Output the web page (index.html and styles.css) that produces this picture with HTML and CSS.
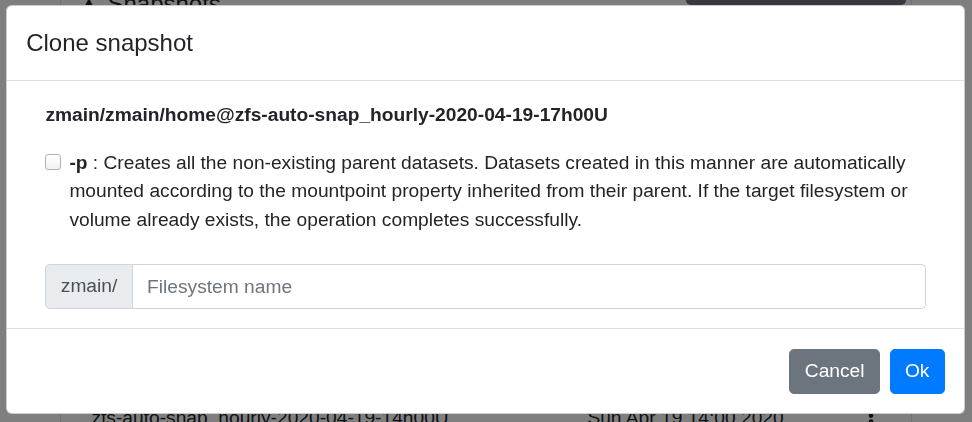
FILE: index.html
```html
<!DOCTYPE html>
<html lang="en">
<head>
<meta charset="utf-8">
<title>Clone snapshot</title>
<link rel="stylesheet" href="styles.css">
</head>
<body>
<div class="page">
  <div class="page-head">
    <h4 class="page-title">▲ Snapshots</h4>
    <div class="head-btn"></div>
  </div>
  <div class="snap-row">
    <div class="cell cell-name">zfs-auto-snap_hourly-2020-04-19-14h00U</div>
    <div class="cell cell-date">Sun Apr 19 14:00 2020</div>
    <div class="cell cell-menu">
      <svg class="kebab" width="6" height="20" viewBox="0 0 6 20"><circle cx="3" cy="2.6" r="2.3" fill="#212529"/><circle cx="3" cy="8.6" r="2.3" fill="#212529"/><circle cx="3" cy="14.6" r="2.3" fill="#212529"/></svg>
    </div>
  </div>
</div>

<div class="backdrop"></div>

<div class="modal">
  <div class="modal-header">
    <h5 class="modal-title">Clone snapshot</h5>
  </div>
  <div class="modal-body">
    <p class="snap-name">zmain/zmain/home@zfs-auto-snap_hourly-2020-04-19-17h00U</p>
    <div class="form-check">
      <span class="check-box"></span>
      <label class="check-label"><b>-p</b> : Creates all the non-existing parent datasets. Datasets created in this manner are automatically mounted according to the mountpoint property inherited from their parent. If the target filesystem or volume already exists, the operation completes successfully.</label>
    </div>
    <div class="input-group">
      <span class="input-prefix">zmain/</span>
      <input class="input-field" type="text" placeholder="Filesystem name">
    </div>
  </div>
  <div class="modal-footer">
    <button class="btn btn-secondary">Cancel</button>
    <button class="btn btn-primary">Ok</button>
  </div>
</div>
</body>
</html>
```
FILE: styles.css
```css
* { box-sizing: border-box; }
html, body { margin: 0; padding: 0; }
body {
  font-family: "Liberation Sans", Arial, sans-serif;
  font-size: 19.2px;
  line-height: 1.5;
  color: #212529;
  background: #fff;
  width: 972px;
  height: 422px;
  overflow: hidden;
}

/* background page */
.page {
  margin: -40px 0 0 60px;
  width: 852px;
  height: 520px;
  border-left: 1px solid #dee2e6;
  border-right: 1px solid #dee2e6;
}
.page-head {
  display: flex;
  align-items: flex-start;
  padding-left: 16px;
  padding-right: 5px;
}
.page-title {
  margin: 25.7px 0 0;
  font-size: 24px;
  font-weight: 400;
  line-height: 36px;
}
.head-btn {
  margin-left: auto;
  width: 220px;
  height: 45px;
  background: #6c757d;
  border-radius: 0 0 4.8px 4.8px;
}
.snap-row {
  display: flex;
  margin: 367.6px 0 0 16px;
}
.cell { padding: 14.4px; }
.cell-name { width: 496px; }
.cell-date { width: 295px; }
.cell-menu { padding-left: 0; }
.kebab { display: block; margin-top: 9.8px; }

.backdrop {
  position: fixed;
  inset: 0;
  background: rgba(0, 0, 0, 0.5);
}

/* modal */
.modal {
  position: fixed;
  top: 5px;
  left: 6px;
  width: 959px;
  background: #fff;
  border: 1px solid rgba(0, 0, 0, 0.2);
  border-radius: 5.76px;
}
.modal-header {
  padding: 19.2px;
  border-bottom: 1px solid #dee2e6;
}
.modal-title {
  margin: 0;
  font-size: 24px;
  font-weight: 500;
  line-height: 1.5;
}
.modal-body {
  padding: 19.2px 38.4px;
}
.snap-name {
  margin: 0 0 19.2px;
  font-weight: 700;
}
.form-check {
  display: flex;
  align-items: flex-start;
}
.check-box {
  flex: none;
  width: 15.6px;
  height: 15.6px;
  margin-top: 5.4px;
  margin-right: 8.4px;
  border: 1px solid #b3b3b3;
  border-radius: 3px;
  background: linear-gradient(#fff, #f1f1f1);
}
.check-label { display: block; }
.input-group {
  display: flex;
  margin-top: 29px;
}
.input-prefix {
  padding: 7.2px 14.4px;
  background: #e9ecef;
  border: 1px solid #ced4da;
  border-radius: 4.8px 0 0 4.8px;
  color: #495057;
  line-height: 28.8px;
}
.input-field {
  flex: 1;
  min-width: 0;
  margin: 0;
  padding: 7.2px 14.4px;
  border: 1px solid #ced4da;
  border-left: 0;
  border-radius: 0 4.8px 4.8px 0;
  font: inherit;
  line-height: 28.8px;
  height: 45.2px;
  color: #495057;
  background: #fff;
  outline: none;
}
.input-field::placeholder { color: #6c757d; opacity: 1; }

.modal-footer {
  display: flex;
  justify-content: flex-end;
  padding: 14.4px;
  border-top: 1px solid #dee2e6;
}
.btn {
  margin: 4.8px;
  padding: 7.2px 14.4px;
  border: 1px solid transparent;
  border-radius: 4.8px;
  font: inherit;
  line-height: 28.8px;
  color: #fff;
}
.btn-secondary { background: #6c757d; border-color: #6c757d; }
.btn-primary { background: #007bff; border-color: #007bff; }
```
